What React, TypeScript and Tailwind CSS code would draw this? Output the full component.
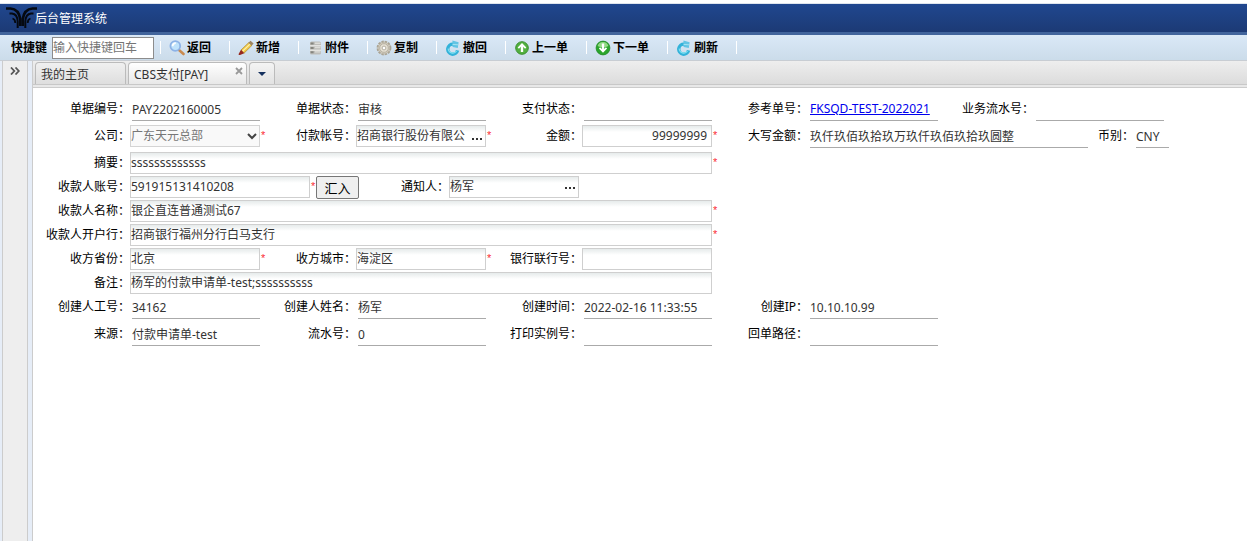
import type { ReactNode } from 'react';

type IconName = 'search' | 'pencil' | 'server' | 'gear' | 'undo' | 'up' | 'down';

const tools: { label: string; icon: IconName; width: string }[] = [
  { label: '返回', icon: 'search', width: 'w-[69px]' },
  { label: '新增', icon: 'pencil', width: 'w-[69px]' },
  { label: '附件', icon: 'server', width: 'w-[69px]' },
  { label: '复制', icon: 'gear', width: 'w-[69px]' },
  { label: '撤回', icon: 'undo', width: 'w-[69px]' },
  { label: '上一单', icon: 'up', width: 'w-[81px]' },
  { label: '下一单', icon: 'down', width: 'w-[81px]' },
  { label: '刷新', icon: 'undo', width: 'w-[69px]' },
];

function ToolIcon({ name }: { name: IconName }) {
  return (
    <svg width="16" height="16" viewBox="0 0 16 16" aria-hidden="true" className="shrink-0">
      {name === 'search' && (
        <>
          <path d="M10 10l4.500 4" stroke="#c98a50" strokeWidth="2.6" strokeLinecap="round" />
          <circle cx="6.300" cy="6" r="4.900" fill="#bfe2fb" stroke="#8db2e6" strokeWidth="1.8" />
          <path d="M3.600 6.200a3 3 0 0 1 3.200-3" fill="none" stroke="#fff" strokeWidth="1.8" />
        </>
      )}
      {name === 'pencil' && (
        <>
          <path d="M3 10L11 2.400l3 2.900-8 7.900z" fill="#f0c948" stroke="#b4903a" strokeWidth=".8" />
          <path d="M4.500 11.200l8-7.600" stroke="#fff0a8" strokeWidth="1.2" />
          <path d="M10.500 2.800L12.600.8 15.600 3.600 13.600 5.700z" fill="#9c8463" />
          <path d="M3 9.800l3.200 3.400-4.200 1.800c-1.500.3-1.600-.8-1.100-1.600z" fill="#96281f" />
        </>
      )}
      {name === 'server' && (
        <>
          <rect x="3" y="1.500" width="11" height="13" rx="1.500" fill="#bdbdb9" />
          <path d="M3 5.800h11M3 10.200h11" stroke="#f3f3f1" strokeWidth="1" />
          <path d="M3.600 3.600h3M3.600 8h3M3.600 12.300h3" stroke="#85857f" strokeWidth="2" />
          <path d="M8 3.200h5.500M8 7.500h5.500M8 11.900h5.500" stroke="#dcdcd8" strokeWidth="1.4" />
        </>
      )}
      {name === 'gear' && (
        <>
          <circle cx="8" cy="8" r="6.500" fill="#cfc9bb" stroke="#aaa495" strokeWidth="1.8" strokeDasharray="2.4 1" />
          <circle cx="8" cy="8" r="4.300" fill="#e6e1d4" stroke="#b8b2a3" strokeWidth="1" />
          <circle cx="8" cy="8" r="1.900" fill="#fff" stroke="#a39d8e" strokeWidth=".8" />
        </>
      )}
      {name === 'undo' && (
        <>
          <path d="M12.600 10.400A5 5 0 1 1 8.200 4.200" fill="none" stroke="#33b2d9" strokeWidth="3.4" />
          <path d="M11.600 11A4.600 4.600 0 0 1 3.200 8.500" fill="none" stroke="#7fe0f2" strokeWidth="1.2" />
          <path d="M7.400.6L13.600 2.200 12.800 8 7.600 7z" fill="#62c4e4" />
          <path d="M7.600 4.400L13 4.800" stroke="#a5e4f3" strokeWidth="1" />
        </>
      )}
      {name === 'up' && (
        <>
          <circle cx="8" cy="8" r="6.300" fill="#52b03f" stroke="#3b8f30" strokeWidth="1" />
          <path d="M8 12V5.500" stroke="#fff" strokeWidth="2.4" />
          <path d="M4.300 8.200L8 4.400l3.700 3.800" fill="none" stroke="#fff" strokeWidth="1.8" />
        </>
      )}
      {name === 'down' && (
        <>
          <circle cx="8" cy="8" r="6.900" fill="#2aa52c" stroke="#1f8a24" strokeWidth=".8" />
          <path d="M2.600 6a5.600 5.600 0 0 1 10.800 0c-3 1.800-7.800 1.800-10.800 0z" fill="#93da86" />
          <path d="M8 3.500v6.500" stroke="#fff" strokeWidth="2.4" />
          <path d="M4.500 7.800L8 11.400l3.500-3.600" fill="none" stroke="#fff" strokeWidth="1.8" />
        </>
      )}
    </svg>
  );
}

function Logo() {
  return (
    <svg width="31" height="22" viewBox="0 0 31 22" aria-hidden="true" className="shrink-0" fill="none" stroke="#050910">
      <path d="M0 1.500h4.500C11 2 13.500 7 14.300 12V19" strokeWidth="2.600" />
      <path d="M31 1.500h-4.500C20 2 17.500 7 16.700 12V19" strokeWidth="2.600" />
      <path d="M3.500 6.500h2.500c4 .5 5.500 4 5.700 8V21" strokeWidth="2" />
      <path d="M27.500 6.500h-2.500c-4 .5-5.500 4-5.700 8V21" strokeWidth="2" />
      <path d="M6.500 11.500c2 .5 2.800 2 2.800 4.500" strokeWidth="1.800" />
      <path d="M24.500 11.500c-2 .5-2.800 2-2.800 4.500" strokeWidth="1.800" />
    </svg>
  );
}

function Separator() {
  return <span className="h-[13px] w-px shrink-0 bg-white" />;
}

function Required() {
  return (
    <span className="absolute top-0 left-full pl-px font-['Liberation_Sans',sans-serif] text-[11px] leading-5 text-red-500">
      *
    </span>
  );
}

function Label({ id, text, width = 'w-24' }: { id: string; text: string; width?: string }) {
  return (
    <label htmlFor={id} className={`${width} h-[22px] shrink-0 text-right leading-[22px] whitespace-nowrap text-black`}>
      {text}：
    </label>
  );
}

type FieldProps = {
  id: string;
  label: string;
  value?: string;
  labelWidth?: string;
  width?: string;
  required?: boolean;
  picker?: boolean;
  align?: string;
};

const boxClass =
  'h-[22px] w-full border border-[#cfcfcf] bg-linear-to-b from-[#e6ebeb] to-white to-30% pb-0.5 leading-[18px] text-[#333] outline-none';

// Bordered input with optional "…" picker and required mark
function Field({ id, label, value = '', labelWidth, width = 'w-[130px]', required, picker, align = '' }: FieldProps) {
  return (
    <>
      <Label id={id} text={label} width={labelWidth} />
      <div className={`relative shrink-0 ${width}`}>
        <input id={id} defaultValue={value} className={`${boxClass} ${picker ? 'pr-5' : align}`} />
        {picker && (
          <button
            type="button"
            aria-label={`选择${label}`}
            className="absolute top-0 right-0 flex h-full w-[18px] items-center justify-center gap-0.5"
          >
            <span className="size-0.5 bg-[#333]" />
            <span className="size-0.5 bg-[#333]" />
            <span className="size-0.5 bg-[#333]" />
          </button>
        )}
        {required && <Required />}
      </div>
    </>
  );
}

// Read only value with an underline
function Plain({ id, label, value = '', labelWidth, width = 'w-32' }: FieldProps) {
  return (
    <>
      <Label id={id} text={label} width={labelWidth} />
      <input
        id={id}
        readOnly
        defaultValue={value}
        className={`ml-0.5 h-[23px] shrink-0 border-b border-[#aaa] leading-[22px] text-[#333] outline-none ${width}`}
      />
    </>
  );
}

function Row({ children, tall }: { children: ReactNode; tall?: boolean }) {
  return <div className={`flex ${tall ? 'h-[27px]' : 'h-6'}`}>{children}</div>;
}

export default function App() {
  return (
    <div className="flex min-h-screen flex-col bg-white font-['Noto_Sans','Noto_Sans_CJK_SC',sans-serif] text-xs text-black">
      <header className="mt-[3px] flex h-8 items-center border-t border-b-[3px] border-t-[#dfe5ee] border-b-[#41649c] bg-linear-to-b from-[#20478f] to-[#1c3a75] pl-[6px] text-white">
        <Logo />
        <h1 className="-ml-0.5 pt-0.5 text-xs">后台管理系统</h1>
      </header>

      <div className="flex h-[26px] shrink-0 items-center border-b border-[#c8cdd3] bg-linear-to-b from-[#dae8f7] to-[#cbdcea] pl-[11px]">
        <label htmlFor="shortcut" className="font-bold">
          快捷键
        </label>
        <input
          id="shortcut"
          placeholder="输入快捷键回车"
          className="mr-[6px] ml-[5px] h-[22px] w-[102px] border border-[#8c8c8c] bg-white placeholder:text-[#757575]"
        />
        <Separator />
        {tools.map(({ label, icon, width }) => (
          <button key={label} type="button" className={`flex shrink-0 items-center gap-0.5 pl-2 font-bold ${width}`}>
            <ToolIcon name={icon} />
            <span className="grow text-left whitespace-nowrap">{label}</span>
            <Separator />
          </button>
        ))}
      </div>

      <div className="flex grow bg-[#e6edf7] pl-0.5">
        <aside className="w-[26px] shrink-0 border-x border-[#ccc] bg-[#eee]">
          <button type="button" aria-label="展开菜单" className="flex w-full justify-center pt-[6px]">
            <svg width="10" height="8" viewBox="0 0 10 8" fill="none" stroke="#555" strokeWidth="1.800">
              <path d="M1 .5L4.300 4 1 7.500M5.500.5L8.800 4 5.500 7.500" />
            </svg>
          </button>
        </aside>

        <main className="ml-1 flex min-w-0 grow flex-col border-l border-[#ccc] bg-white">
          <nav className="flex h-6 items-end border-b border-[#c8c8c8] bg-linear-to-b from-[#eee] to-[#dcdcdc] pl-0.5 text-[#333]">
            <button
              type="button"
              className="h-[22px] w-[91px] rounded-t-sm border border-b-0 border-[#bbb] bg-linear-to-b from-[#f0f0f0] to-[#dedede] pt-0.5 pl-[5px] text-left"
            >
              我的主页
            </button>
            <div className="relative ml-0.5 h-[22px] w-[119px] rounded-t-sm border border-b-0 border-[#bbb] bg-linear-to-b from-white to-[#e8e8e8]">
              <button type="button" className="h-full w-full pt-0.5 pl-[5px] text-left">
                CBS支付[PAY]
              </button>
              <button type="button" aria-label="关闭" className="absolute top-1 right-[3px]">
                <svg width="8" height="8" viewBox="0 0 8 8" stroke="#999" strokeWidth="1.800">
                  <path d="M1 1l6 6M7 1L1 7" />
                </svg>
              </button>
            </div>
            <button
              type="button"
              aria-label="更多标签"
              className="ml-0.5 flex h-[22px] w-[26px] items-center justify-center rounded-t-sm border border-b-0 border-[#bbb] bg-linear-to-b from-[#f4f4f4] to-[#e2e2e2]"
            >
              <svg width="8" height="4" viewBox="0 0 8 4" fill="#15305e">
                <path d="M0 0h8L4 4z" />
              </svg>
            </button>
          </nav>
          <div className="h-[3px] border-b border-[#ccc] bg-[#e8e8e8]" />

          <form className="pt-[10px]">
            <Row tall>
              <Plain id="billNo" label="单据编号" value="PAY2202160005" labelWidth="w-[97px]" />
              <Plain id="billState" label="单据状态" value="审核" />
              <Plain id="payState" label="支付状态" />
              <Label id="refNo" text="参考单号" />
              <output id="refNo" className="ml-0.5 h-[23px] w-32 shrink-0 border-b border-[#aaa] leading-[22px]">
                <a href="#ref" className="whitespace-nowrap text-[#0000ee] underline">
                  FKSQD-TEST-2022021
                </a>
              </output>
              <Plain id="serial" label="业务流水号" />
            </Row>
            <Row tall>
              <Label id="company" text="公司" width="w-[97px]" />
              <div className="relative w-[130px] shrink-0">
                <select
                  id="company"
                  disabled
                  className="h-[22px] w-full appearance-none border border-[#d4d4d4] bg-[#f9f9f9] text-[#777] opacity-100"
                >
                  <option>广东天元总部</option>
                </select>
                <svg
                  width="10"
                  height="7"
                  viewBox="0 0 10 7"
                  fill="none"
                  stroke="#444"
                  strokeWidth="2"
                  className="pointer-events-none absolute top-2 right-[3px]"
                >
                  <path d="M1 1l4 4 4-4" />
                </svg>
                <Required />
              </div>
              <Field id="payAccount" label="付款帐号" value="招商银行股份有限公" picker required />
              <Field id="amount" label="金额" value="99999999" align="pr-1 text-right" required />
              <Plain id="amountText" label="大写金额" value="玖仟玖佰玖拾玖万玖仟玖佰玖拾玖圆整" width="w-[278px]" />
              <Plain id="currency" label="币别" value="CNY" labelWidth="w-[46px]" width="w-[33px]" />
            </Row>
            <Row>
              <Field id="summary" label="摘要" value="sssssssssssss" labelWidth="w-[97px]" width="w-[582px]" required />
            </Row>
            <Row>
              <Field id="payeeAccount" label="收款人账号" value="591915131410208" labelWidth="w-[97px]" width="w-[180px]" required />
              <button
                type="button"
                className="ml-[6px] h-[23px] w-[43px] shrink-0 rounded-xs border border-[#767676] bg-[#efefef] text-[13px] leading-5 text-black"
              >
                汇入
              </button>
              <Field id="notify" label="通知人" value="杨军" labelWidth="w-[90px]" picker />
            </Row>
            <Row>
              <Field id="payeeName" label="收款人名称" value="银企直连普通测试67" labelWidth="w-[97px]" width="w-[582px]" required />
            </Row>
            <Row>
              <Field id="payeeBank" label="收款人开户行" value="招商银行福州分行白马支行" labelWidth="w-[97px]" width="w-[582px]" required />
            </Row>
            <Row>
              <Field id="province" label="收方省份" value="北京" labelWidth="w-[97px]" required />
              <Field id="city" label="收方城市" value="海淀区" required />
              <Field id="bankNo" label="银行联行号" />
            </Row>
            <Row>
              <Field id="remark" label="备注" value="杨军的付款申请单-test;ssssssssss" labelWidth="w-[97px]" width="w-[582px]" />
            </Row>
            <Row tall>
              <Plain id="creatorNo" label="创建人工号" value="34162" labelWidth="w-[97px]" />
              <Plain id="creatorName" label="创建人姓名" value="杨军" />
              <Plain id="createdAt" label="创建时间" value="2022-02-16 11:33:55" />
              <Plain id="createdIp" label="创建IP" value="10.10.10.99" />
            </Row>
            <Row tall>
              <Plain id="source" label="来源" value="付款申请单-test" labelWidth="w-[97px]" />
              <Plain id="flowNo" label="流水号" value="0" />
              <Plain id="printNo" label="打印实例号" />
              <Plain id="receipt" label="回单路径" />
            </Row>
          </form>
        </main>
      </div>
    </div>
  );
}
